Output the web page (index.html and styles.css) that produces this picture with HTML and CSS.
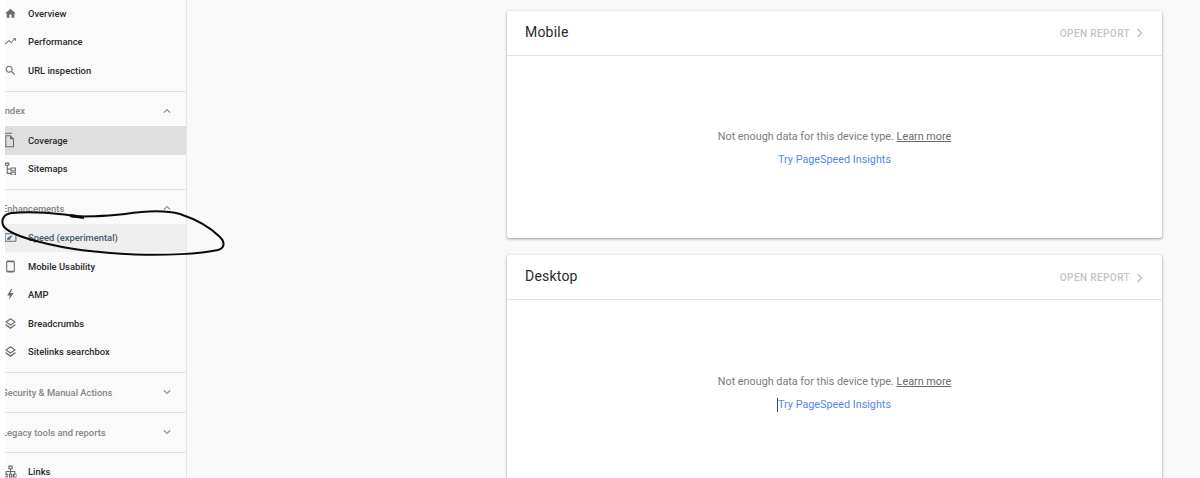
FILE: index.html
```html
<!DOCTYPE html>
<html lang="en">
<head>
<meta charset="utf-8">
<title>Speed</title>
<link rel="stylesheet" href="styles.css">
</head>
<body>
<svg class="defs" width="0" height="0" aria-hidden="true">
  <symbol id="i-home" viewBox="0 0 24 24"><path d="M10 20v-6h4v6h5v-8h3L12 3 2 12h3v8z"/></symbol>
  <symbol id="i-trend" viewBox="0 0 24 24"><path d="M15 6l3.300 1.200-4.900 5.500-4-3.500L1 16.600 2 18l7.400-6.300 4 3.500 6-6.700L22 12V6z"/></symbol>
  <symbol id="i-search" viewBox="0 0 24 24"><path d="M15.5 14h-.79l-.28-.27C15.41 12.59 16 11.11 16 9.5 16 5.91 13.09 3 9.5 3S3 5.91 3 9.5 5.91 16 9.5 16c1.61 0 3.09-.59 4.23-1.57l.27.28v.79l5 4.99L20.49 19l-4.99-5zm-6 0C7.01 14 5 11.99 5 9.5S7.01 5 9.5 5 14 7.01 14 9.500 11.99 14 9.500 14z"/></symbol>
  <symbol id="i-doc" viewBox="0 0 24 24"><path d="M3 1h12v1.500H3zM5 5h8l5 5v13H5zm1.500 1.500v15h10V11h-4.500V6.500z"/></symbol>
  <symbol id="i-map" viewBox="0 0 24 24"><path d="M2 1h8v6H7v5h5v-2h10v7H12v-3H7v6h5v-2h10v7H12v-3H5V7H2zm2 2v2h4V3zm10 9v3h6v-3zm0 8v3h6v-3z"/></symbol>
  <symbol id="i-speed" viewBox="0 0 24 24"><path d="M3 4h18a2 2 0 0 1 2 2v12a2 2 0 0 1-2 2H3a2 2 0 0 1-2-2V6a2 2 0 0 1 2-2zm0 2v12h18V6zm2 10l2-4 9-5-5 9z"/></symbol>
  <symbol id="i-phone" viewBox="0 0 24 24"><path d="M7 1h10a3 3 0 0 1 3 3v16a3 3 0 0 1-3 3H7a3 3 0 0 1-3-3V4a3 3 0 0 1 3-3zm-1 3v16h12V4z"/></symbol>
  <symbol id="i-bolt" viewBox="0 0 24 24"><path d="M13 2L6 14h5l-2 8 9-13h-6l3-7z"/></symbol>
  <symbol id="i-layers" viewBox="0 0 24 24"><path d="M12 2L2 9l10 7 10-7zm0 2.600L18.500 9 12 13.400 5.500 9zM4 13.200l-2 1.500L12 22l10-7.300-2-1.500-8 5.800z"/></symbol>
  <symbol id="i-links" viewBox="0 0 24 24"><path d="M8 1h8v7h-3v3h8v5h2v7h-7v-7h3v-3h-6v3h2v7H9v-7h2v-3H5v3h2v7H0v-7h3v-5h8V8H8zm2 2v3h4V3zM2 18v3h3v-3zm9 0v3h2v-3zm8 0v3h3v-3z"/></symbol>
  <symbol id="i-up" viewBox="0 0 24 24"><path d="M12 8l-6 6 1.400 1.400L12 10.800l4.600 4.600L18 14z"/></symbol>
  <symbol id="i-down" viewBox="0 0 24 24"><path d="M16.600 8.600L12 13.200 7.400 8.600 6 10l6 6 6-6z"/></symbol>
  <symbol id="i-right" viewBox="0 0 24 24"><path d="M8.600 4.400L7 6l6 6-6 6 1.600 1.600L16.200 12z"/></symbol>
</svg>

<div class="page">
  <div class="strip"></div>
  <nav class="nav">
    <a class="item item-first"><svg class="ico"><use href="#i-home"/></svg>Overview</a>
    <a class="item"><svg class="ico"><use href="#i-trend"/></svg>Performance</a>
    <a class="item"><svg class="ico"><use href="#i-search"/></svg>URL inspection</a>
    <div class="rule rule-top"></div>
    <div class="head head-open"><span class="head-text">Index</span><svg class="chev"><use href="#i-up"/></svg></div>
    <a class="item item-active"><svg class="ico ico-lg"><use href="#i-doc"/></svg>Coverage</a>
    <a class="item"><svg class="ico"><use href="#i-map"/></svg>Sitemaps</a>
    <div class="rule"></div>
    <div class="head head-open"><span class="head-text">Enhancements</span><svg class="chev"><use href="#i-up"/></svg></div>
    <a class="item item-current"><svg class="ico"><use href="#i-speed"/></svg>Speed (experimental)</a>
    <a class="item"><svg class="ico"><use href="#i-phone"/></svg>Mobile Usability</a>
    <a class="item"><svg class="ico"><use href="#i-bolt"/></svg>AMP</a>
    <a class="item"><svg class="ico"><use href="#i-layers"/></svg>Breadcrumbs</a>
    <a class="item"><svg class="ico"><use href="#i-layers"/></svg>Sitelinks searchbox</a>
    <div class="rule"></div>
    <div class="head"><span class="head-text">Security &amp; Manual Actions</span><svg class="chev"><use href="#i-down"/></svg></div>
    <div class="rule"></div>
    <div class="head"><span class="head-text">Legacy tools and reports</span><svg class="chev"><use href="#i-down"/></svg></div>
    <div class="rule"></div>
    <a class="item item-last"><svg class="ico"><use href="#i-links"/></svg>Links</a>
  </nav>
  <main class="main">
    <section class="card">
      <header class="card-head">
        <h2 class="card-title">Mobile</h2>
        <a class="open">OPEN REPORT<svg class="open-ico"><use href="#i-right"/></svg></a>
      </header>
      <div class="card-body">
        <p class="msg">Not enough data for this device type. <a class="learn">Learn more</a></p>
        <a class="try">Try PageSpeed Insights</a>
      </div>
    </section>
    <section class="card">
      <header class="card-head card-head-low">
        <h2 class="card-title">Desktop</h2>
        <a class="open">OPEN REPORT<svg class="open-ico"><use href="#i-right"/></svg></a>
      </header>
      <div class="card-body card-body-low">
        <p class="msg">Not enough data for this device type. <a class="learn">Learn more</a></p>
        <a class="try try-caret">Try PageSpeed Insights</a>
      </div>
    </section>
  </main>
  <svg class="scribble" width="240" height="70" viewBox="0 200 240 70" aria-hidden="true">
    <path class="scribble-line" d="M82 217 C60 213 30 211 12 213 C4 214 1 219 3 225 C6 232 20 237 40 242 C70 250 100 253 135 254.500 C165 255.500 200 254 218 250 C225 248 225 242 220 237 C210 227 195 219 180 214 C165 210 145 211 125 214 C110 216 95 216.500 72 216.500"/>
    <path class="scribble-thick" d="M70 215.500 L84 217.500"/>
  </svg>
</div>
</body>
</html>
```

FILE: styles.css
```css
* { box-sizing: border-box; }
html, body { margin: 0; height: 100%; }
body {
  background: #fff;
  font-family: Roboto, "Liberation Sans", sans-serif;
  overflow: hidden;
}
.defs { position: absolute; }
.page {
  position: relative;
  display: flex;
  height: 478px;
  overflow: hidden;
}
.strip { flex: 0 0 5px; background: #fff; }
.nav {
  flex: 0 0 182px;
  height: 478px;
  overflow: hidden;
  background: #fafafa;
  border-right: 1px solid #e6e6e6;
  font-size: 9.400px;
  color: #2b2b2b;
}
.item {
  display: flex;
  align-items: center;
  height: 28.500px;
  font-weight: 500;
}
.item-first { margin-top: -1px; }
.item-last { margin-top: 5px; }
.ico {
  flex: none;
  width: 13px;
  height: 13px;
  margin: 0 11px 0 -1px;
  fill: #6b6b6b;
}
.ico-lg {
  width: 16px;
  height: 16px;
  margin: 0 10px 0 -3px;
}
.item-active { background: #dedede; }
.item-current { background: #eeeeee; color: #4a5a68; }
.item-current .ico { fill: #5f6f7c; }
.rule { height: 1px; margin-top: 5.500px; background: #e3e3e3; }
.rule-top { margin-top: 6.500px; }
.head {
  display: flex;
  align-items: center;
  justify-content: space-between;
  height: 39px;
  margin-left: -3px;
  padding-right: 12px;
  font-size: 9.400px;
  font-weight: 500;
  color: #858585;
}
.head-open { height: 34px; padding-top: 3px; }
.head + .rule { margin-top: 0; }
.chev { width: 14px; height: 14px; fill: #8a8a8a; }
.main {
  flex: 1;
  background: #f9f9f9;
  padding: 11px 38px 0 320px;
  display: flex;
  flex-direction: column;
  gap: 17px;
}
.card {
  flex: none;
  height: 227px;
  background: #fff;
  border-radius: 2px;
  box-shadow: 0 1px 3px rgba(0,0,0,.38), 0 0 1px rgba(0,0,0,.1);
}
.card-head {
  display: flex;
  align-items: center;
  justify-content: space-between;
  height: 45px;
  padding: 0 15px 0 18px;
  border-bottom: 1px solid #e4e4e4;
}
.card-head-low .open { margin-top: 1px; }
.card-title {
  margin: -2px 0 0;
  font-size: 14px;
  font-weight: 400;
  letter-spacing: .2px;
  color: #2a2a2a;
}
.open {
  display: flex;
  align-items: center;
  gap: 3px;
  font-size: 10px;
  font-weight: 500;
  letter-spacing: .4px;
  color: #c4c4c4;
}
.open-ico { width: 14px; height: 14px; fill: #bdbdbd; }
.card-body {
  display: flex;
  flex-direction: column;
  align-items: center;
  padding-top: 74px;
  font-size: 10.800px;
  line-height: 14px;
}
.card-body-low { padding-top: 75px; }
.msg { margin: 0 0 9px; color: #7b7b7b; }
.learn { color: #6a6a6a; text-decoration: underline; }
.try { color: #5288ea; }
.try-caret { border-left: 1px solid #444; margin-left: -1px; }
.scribble {
  position: absolute;
  left: 0;
  top: 200px;
}
.scribble-line {
  fill: none;
  stroke: #0a0a0a;
  stroke-width: 2px;
  stroke-linecap: round;
}
.scribble-thick {
  fill: none;
  stroke: #0a0a0a;
  stroke-width: 3px;
}
```
